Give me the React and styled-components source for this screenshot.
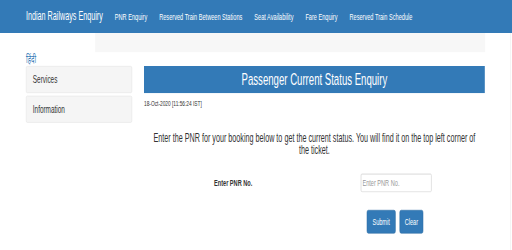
import React from "react";
import styled, { createGlobalStyle } from "styled-components";

// the reference is a 1280px wide page squeezed into 512x250
const SCALE_X = 0.4;
const SCALE_Y = 0.66;

const GlobalStyle = createGlobalStyle`
  html, body {
    margin: 0;
    padding: 0;
    overflow: hidden;
    background: #fff;
  }
  body {
    font-family: "Liberation Sans", Arial, sans-serif;
    color: #333;
  }
`;

const Viewport = styled.div`
  width: 512px;
  height: 250px;
  overflow: hidden;
`;

const Stage = styled.div`
  width: 1280px;
  height: 379px;
  transform: scale(${SCALE_X}, ${SCALE_Y});
  transform-origin: 0 0;
  overflow: hidden;
`;

const Navbar = styled.nav`
  height: 50px;
  background: #337ab7;
  display: flex;
  align-items: center;
  padding-left: 50px;
`;

const Brand = styled.a`
  font-size: 18px;
  color: #fff;
  padding: 0 15px;
`;

const NavLink = styled.a`
  font-size: 14px;
  color: #fff;
  padding: 0 15px;
`;

const Body = styled.div`
  width: 1275px;
  height: 329px;
  border-right: 1px solid #e6e6e6;
`;

const Jumbotron = styled.div`
  margin-left: 238px;
  width: 975px;
  height: 29px;
  background: #f7f7f7;
`;

const Row = styled.div`
  display: grid;
  grid-template-columns: 265px 852px;
  column-gap: 30px;
  padding-left: 65px;
`;

const Sidebar = styled.div`
  display: flex;
  flex-direction: column;
  gap: 4px;
`;

const LangLink = styled.a`
  font-size: 16px;
  line-height: 21px;
  height: 21px;
  color: #337ab7;
  font-family: "Noto Sans", "Liberation Sans", sans-serif;
  margin-bottom: -4px;
`;

const MenuItem = styled.div`
  height: 41px;
  box-sizing: border-box;
  background: #f5f5f5;
  border: 1px solid #e3e3e3;
  border-radius: 3px;
  display: flex;
  align-items: center;
  padding-left: 16px;
  font-size: 16px;
  color: #333;
`;

const Main = styled.div`
  padding-top: 21px;
  display: flex;
  flex-direction: column;
`;

const TitleBar = styled.h3`
  margin: 0;
  height: 41px;
  background: #337ab7;
  color: #fff;
  font-size: 24px;
  font-weight: 400;
  display: flex;
  align-items: center;
  justify-content: center;
`;

const Stamp = styled.div`
  font-size: 12px;
  margin-top: 8px;
`;

const Lead = styled.p`
  margin: 37px 0 0;
  padding: 0 20px;
  font-size: 18px;
  line-height: 18px;
  text-align: center;
  color: #333;
`;

const FormRow = styled.div`
  display: grid;
  grid-template-columns: 367px 177px;
  align-items: center;
  padding-left: 175px;
  margin-top: ${(p) => p.$top}px;
`;

const Label = styled.label`
  font-size: 14px;
  font-weight: 700;
`;

const Input = styled.input`
  box-sizing: border-box;
  width: 177px;
  height: 28px;
  border: 1px solid #ccc;
  border-radius: 3px;
  padding: 0 3px;
  font-family: inherit;
  font-size: 14px;
  box-shadow: inset 0 1px 1px rgba(0, 0, 0, 0.075);
  &::placeholder {
    color: #999;
  }
`;

const Buttons = styled.div`
  display: flex;
  gap: 10px;
  padding-left: 557px;
  margin-top: 27px;
`;

const Button = styled.button`
  height: 36px;
  padding: 0 ${(p) => p.$pad}px;
  background: #337ab7;
  border: 1px solid #2e6da4;
  border-radius: 4px;
  color: #fff;
  font-family: inherit;
  font-size: 14px;
`;

const links = [
  "PNR Enquiry",
  "Reserved Train Between Stations",
  "Seat Availability",
  "Fare Enquiry",
  "Reserved Train Schedule",
];

export default function App() {
  return (
    <Viewport>
      <GlobalStyle />
      <Stage>
        <Navbar>
          <Brand>Indian Railways Enquiry</Brand>
          {links.map((l) => (
            <NavLink key={l}>{l}</NavLink>
          ))}
        </Navbar>
        <Body>
          <Jumbotron />
          <Row>
            <Sidebar>
              <LangLink>हिंदी</LangLink>
              <MenuItem>Services</MenuItem>
              <MenuItem>Information</MenuItem>
            </Sidebar>
            <Main>
              <TitleBar>Passenger Current Status Enquiry</TitleBar>
              <Stamp>18-Oct-2020 [11:56:24 IST]</Stamp>
              <Lead>
                Enter the PNR for your booking below to get the current status.
                You will find it on the top left corner of the ticket.
              </Lead>
              <FormRow $top={27}>
                <Label>Enter PNR No.</Label>
                <Input placeholder="Enter PNR No." />
              </FormRow>
              <Buttons>
                <Button $pad={13}>Submit</Button>
                <Button $pad={12}>Clear</Button>
              </Buttons>
            </Main>
          </Row>
        </Body>
      </Stage>
    </Viewport>
  );
}
